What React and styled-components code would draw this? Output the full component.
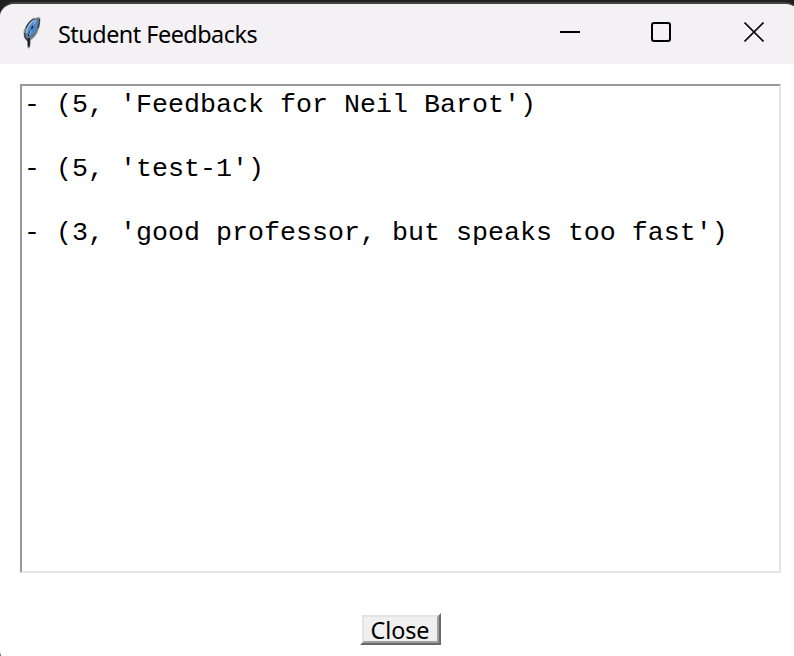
import React from "react";
import styled, { createGlobalStyle } from "styled-components";

const GlobalStyle = createGlobalStyle`
  * { box-sizing: border-box; }
  body { margin: 0; background: #202020; overflow: hidden; }
`;

const Desktop = styled.div`
  width: 794px;
  height: 656px;
  padding-top: 2px;
  overflow: hidden;
  background: #202020;
`;

const Window = styled.main`
  display: flex;
  flex-direction: column;
  width: 800px;
  height: 663px;
  border-top: 2px solid #444344;
  border-radius: 15px 15px 14px 14px;
  background: #fff;
  overflow: hidden;
`;

const TitleBar = styled.header`
  display: flex;
  flex: none;
  height: 60px;
  padding-left: 19px;
  background: #f3f1f3;
`;

const FeatherIcon = styled.svg`
  flex: none;
  width: 24px;
  height: 36px;
  margin: 11px 15px 0 0;
`;

const Title = styled.h1`
  flex: 1;
  margin: 0;
  font: 400 23.4px/61px "Noto Sans", "Open Sans", sans-serif;
  letter-spacing: -0.5px;
  white-space: nowrap;
  color: #000;
`;

const WindowControls = styled.div`
  display: flex;
  width: 276px;
`;

const ControlButton = styled.button`
  flex: none;
  width: ${({ $width }) => $width}px;
  height: 56px;
  padding: 0;
  border: 0;
  background: none;
  svg { display: block; margin: 0 auto; }
`;

const Body = styled.section`
  display: flex;
  flex: 1;
  flex-direction: column;
  align-items: flex-start;
  padding: 20px;
`;

const FeedbackList = styled.div`
  width: 761px;
  height: 489px;
  flex: none;
  padding: 3px 2px;
  border: 2px solid;
  border-color: #999899 #e5e5e5 #e5e5e5 #999899;
`;

const FeedbackLine = styled.p`
  height: 32px;
  margin: 0 0 32px;
  font: 400 26.67px/32px "Liberation Mono", "Courier New", monospace;
  white-space: pre;
  color: #000;
`;

const CloseButton = styled.button`
  width: 81px;
  height: 32px;
  margin: 40px 0 0 340px;
  padding: 0;
  border: 2px solid;
  border-color: #fff #696969 #696969 #fff;
  background: #f0f0f0;
`;

const CloseLabel = styled.span`
  display: block;
  height: 28px;
  padding-right: 1px;
  border: 2px solid;
  border-color: #e3e3e3 #a0a0a0 #a0a0a0 #e3e3e3;
  font: 400 23.4px/27px "Noto Sans", "Open Sans", sans-serif;
  letter-spacing: -0.1px;
  text-align: center;
  color: #000;
`;

const feedbacks = [
  "- (5, 'Feedback for Neil Barot')",
  "- (5, 'test-1')",
  "- (3, 'good professor, but speaks too fast')",
];

const Feather = () => (
  <FeatherIcon viewBox="0 0 24 36" aria-hidden="true">
    <path d="M18.500 2.500 L21 3 Q21.500 10 18 18 Q15 23 11.500 25 L10.500 33 L9 33 L8.500 26 Q4.500 23 5 16 Q8 6 18.500 2.500Z" fill="#68727b" stroke="#a0a2a5" strokeWidth="1" />
    <path d="M18 4 Q20.500 8 16 17 L10 23 Q7 20 8 15 Q11 7 18 4Z" fill="#4c86cb" />
    <path d="M15 5 Q8 11 7.500 18" fill="none" stroke="#9fc0df" strokeWidth="1.600" />
    <path d="M15 9 L12.500 14 M11.500 16 L9.500 21" fill="none" stroke="#172d45" strokeWidth="1.600" />
    <path d="M17 5 L14 11 M12 16 L10.500 20" fill="none" stroke="#a9cbec" strokeWidth="1" />
    <path d="M15.500 3.500 Q10 6 7 13 M5.500 18 L6 22.500 L9 26 M20.500 4 Q20.500 9 19 13" fill="none" stroke="#363b40" strokeWidth="1.200" />
    <path d="M9.800 23 L9.800 31.500" fill="none" stroke="#161a1d" strokeWidth="2" />
  </FeatherIcon>
);

export default function App() {
  return (
    <Desktop>
      <GlobalStyle />
      <Window>
        <TitleBar>
          <Feather />
          <Title>Student Feedbacks</Title>
          <WindowControls>
            <ControlButton $width={92} aria-label="Minimize">
              <svg width="20" height="20"><path d="M0 10H20" stroke="#000" strokeWidth="2" /></svg>
            </ControlButton>
            <ControlButton $width={90} aria-label="Maximize">
              <svg width="20" height="20"><rect x="1" y="1" width="18" height="18" rx="2" fill="none" stroke="#000" strokeWidth="2" /></svg>
            </ControlButton>
            <ControlButton $width={96} aria-label="Close window">
              <svg width="20" height="20"><path d="M.5 .5L19.500 19.500M19.500 .5L.5 19.500" stroke="#111" strokeWidth="1.700" /></svg>
            </ControlButton>
          </WindowControls>
        </TitleBar>
        <Body>
          <FeedbackList>
            {feedbacks.map((line) => <FeedbackLine key={line}>{line}</FeedbackLine>)}
          </FeedbackList>
          <CloseButton><CloseLabel>Close</CloseLabel></CloseButton>
        </Body>
      </Window>
    </Desktop>
  );
}
